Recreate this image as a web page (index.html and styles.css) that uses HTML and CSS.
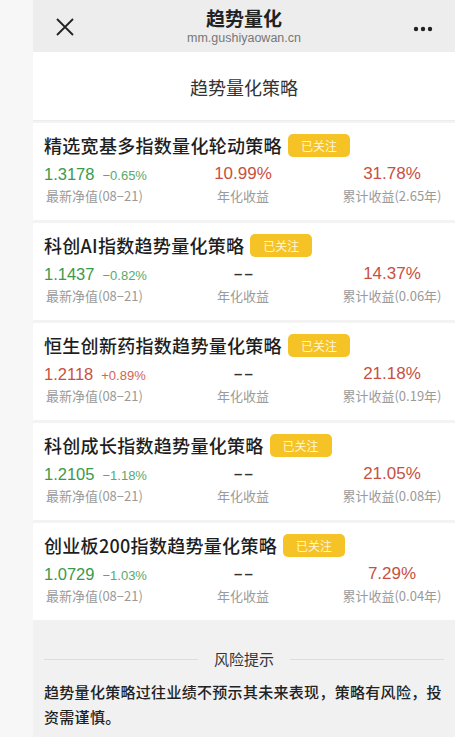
FILE: index.html
```html
<!DOCTYPE html>
<html>
<head>
  <meta charset="utf-8">
  <title>趋势量化</title>
  <link rel="stylesheet" href="styles.css">
</head>
<body>
  <div class="page">
    <div class="topbar">
      <svg class="close" width="20" height="20" viewBox="0 0 20 20">
        <path d="M2 2 L18 18 M18 2 L2 18" stroke="#222" stroke-width="1.8" fill="none"/>
      </svg>
      <div class="topbar-title">
        <div class="name">趋势量化</div>
        <div class="url">mm.gushiyaowan.cn</div>
      </div>
      <svg class="more" width="20" height="6" viewBox="0 0 20 6">
        <circle cx="3" cy="3" r="2.2" fill="#222"/>
        <circle cx="10" cy="3" r="2.2" fill="#222"/>
        <circle cx="17" cy="3" r="2.2" fill="#222"/>
      </svg>
    </div>

    <div class="section-title">趋势量化策略</div>

    <div class="list">
      <div class="card">
        <div class="card-head"><span class="card-name">精选宽基多指数量化轮动策略</span><span class="badge">已关注</span></div>
        <div class="stats">
          <div class="col"><span class="nav">1.3178</span><span class="chg down">−0.65%</span></div>
          <div class="col mid red">10.99%</div>
          <div class="col total red">31.78%</div>
          <div class="label first">最新净值(08−21)</div>
          <div class="label mid">年化收益</div>
          <div class="label total">累计收益(2.65年)</div>
        </div>
      </div>

      <div class="card">
        <div class="card-head"><span class="card-name">科创AI指数趋势量化策略</span><span class="badge">已关注</span></div>
        <div class="stats">
          <div class="col"><span class="nav">1.1437</span><span class="chg down">−0.82%</span></div>
          <div class="col mid dash">– –</div>
          <div class="col total red">14.37%</div>
          <div class="label first">最新净值(08−21)</div>
          <div class="label mid">年化收益</div>
          <div class="label total">累计收益(0.06年)</div>
        </div>
      </div>

      <div class="card">
        <div class="card-head"><span class="card-name">恒生创新药指数趋势量化策略</span><span class="badge">已关注</span></div>
        <div class="stats">
          <div class="col"><span class="nav red">1.2118</span><span class="chg up">+0.89%</span></div>
          <div class="col mid dash">– –</div>
          <div class="col total red">21.18%</div>
          <div class="label first">最新净值(08−21)</div>
          <div class="label mid">年化收益</div>
          <div class="label total">累计收益(0.19年)</div>
        </div>
      </div>

      <div class="card">
        <div class="card-head"><span class="card-name">科创成长指数趋势量化策略</span><span class="badge">已关注</span></div>
        <div class="stats">
          <div class="col"><span class="nav">1.2105</span><span class="chg down">−1.18%</span></div>
          <div class="col mid dash">– –</div>
          <div class="col total red">21.05%</div>
          <div class="label first">最新净值(08−21)</div>
          <div class="label mid">年化收益</div>
          <div class="label total">累计收益(0.08年)</div>
        </div>
      </div>

      <div class="card">
        <div class="card-head"><span class="card-name">创业板200指数趋势量化策略</span><span class="badge">已关注</span></div>
        <div class="stats">
          <div class="col"><span class="nav">1.0729</span><span class="chg down">−1.03%</span></div>
          <div class="col mid dash">– –</div>
          <div class="col total red">7.29%</div>
          <div class="label first">最新净值(08−21)</div>
          <div class="label mid">年化收益</div>
          <div class="label total">累计收益(0.04年)</div>
        </div>
      </div>
    </div>

    <div class="risk">
      <div class="risk-title"><span>风险提示</span></div>
      <p>趋势量化策略过往业绩不预示其未来表现，策略有风险，投资需谨慎。</p>
    </div>
  </div>
</body>
</html>
```

FILE: styles.css
```css
/* page */

body {
  margin: 0;
  background-color: #f7f7f7;
  font-family: "Liberation Sans", Arial, "Noto Sans CJK SC", sans-serif;
  color: #222;
}

.page {
  margin-left: 33px;
  width: 422px;
  min-height: 737px;
  background-color: #f1f1f1;
}

/* top bar */

.topbar {
  height: 52px;
  background-color: #ededed;
  display: grid;
  grid-template-columns: 1fr auto 1fr;
  align-items: center;
  padding: 0 22px;
  box-sizing: border-box;
}

.close {
  margin-top: 1px;
}

.topbar-title {
  text-align: center;
}

.topbar-title .name {
  font-family: "Noto Sans CJK SC", sans-serif;
  font-size: 19px;
  font-weight: bold;
  line-height: 22px;
  margin-top: 1px;
}

.topbar-title .url {
  font-size: 12.5px;
  color: #777;
  line-height: 16px;
  margin-top: 1px;
}

.more {
  justify-self: end;
  margin-top: 6px;
}

/* section title */

.section-title {
  height: 68px;
  background-color: #fff;
  font-family: "Noto Sans CJK SC", sans-serif;
  font-size: 18px;
  color: #333;
  text-align: center;
  line-height: 70px;
  border-bottom: 1px solid #ececec;
}

/* strategy list */

.list {
  display: flex;
  flex-direction: column;
  gap: 3px;
  padding-top: 2px;
  background-color: #f3f3f3;
}

.card {
  background-color: #fff;
  padding: 9px 11px 15px 11px;
}

.card-head {
  display: flex;
  align-items: center;
  height: 26px;
}

.card-name {
  font-family: "Noto Sans CJK SC", sans-serif;
  font-size: 18px;
  font-weight: 500;
  color: #1e1e1e;
  letter-spacing: 0.3px;
}

.badge {
  margin-left: 6px;
  width: 62px;
  height: 23px;
  line-height: 23px;
  border-radius: 5px;
  background-color: #f5c325;
  color: #fff6d6;
  font-family: "Noto Sans CJK SC", sans-serif;
  font-size: 12px;
  text-align: center;
}

.stats {
  display: grid;
  grid-template-columns: 140px 118px 1fr;
  margin-top: 5px;
}

.col {
  height: 22px;
  line-height: 22px;
  font-size: 17px;
  white-space: nowrap;
}

.mid {
  text-align: center;
}

.total {
  text-align: center;
  padding-left: 38px;
}

.nav {
  color: #3a9a4c;
  font-size: 16.5px;
}

.chg {
  font-size: 13px;
  margin-left: 8px;
}

.down {
  color: #5ba86a;
}

.up {
  color: #d06555;
}

.red {
  color: #c9503f;
}

.nav.red {
  color: #c9503f;
}

.dash {
  color: #333;
  font-weight: bold;
  font-size: 15px;
  letter-spacing: -1px;
}

.label {
  margin-top: 2px;
  height: 18px;
  line-height: 18px;
  font-size: 13px;
  color: #9a9a9a;
  font-family: "Noto Sans CJK SC", sans-serif;
  white-space: nowrap;
}

.label.first {
  padding-left: 2px;
}

/* risk */

.risk {
  background-color: #f1f1f1;
  padding: 28px 11px 10px 11px;
}

.risk-title {
  display: flex;
  align-items: center;
  gap: 16px;
  font-family: "Noto Sans CJK SC", sans-serif;
  font-size: 15px;
  color: #333;
  line-height: 22px;
}

.risk-title::before,
.risk-title::after {
  content: "";
  flex: 1;
  height: 1px;
  background-color: #dcdcdc;
}

.risk p {
  margin: 9px 0 0 0;
  font-family: "Noto Sans CJK SC", sans-serif;
  font-size: 15px;
  font-weight: 500;
  line-height: 25px;
  color: #222;
  letter-spacing: 0.3px;
}
```
